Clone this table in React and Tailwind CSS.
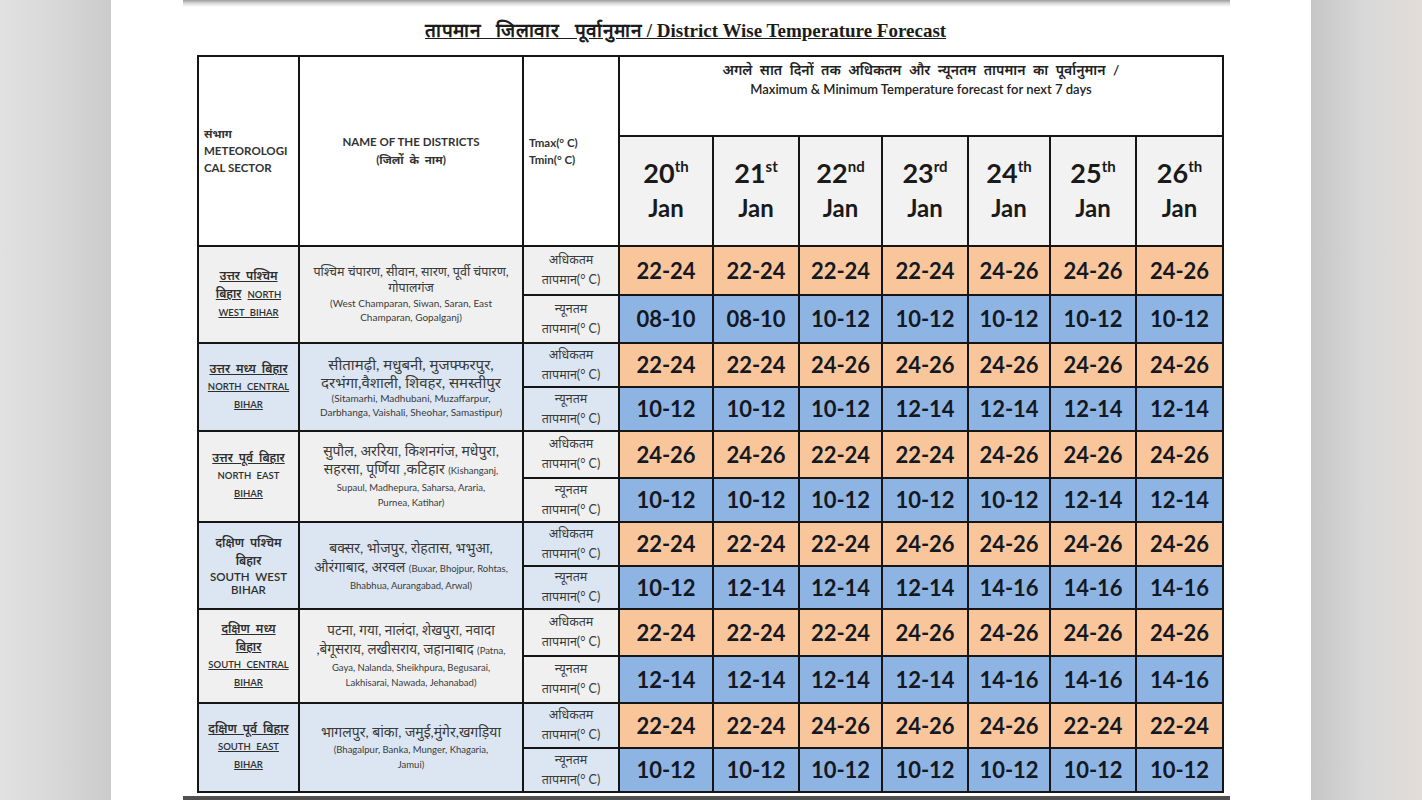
import React from "react";

const dates = [
  ["20", "th"],
  ["21", "st"],
  ["22", "nd"],
  ["23", "rd"],
  ["24", "th"],
  ["25", "th"],
  ["26", "th"],
];

// each district line: [hindi, english] - either part may be empty
const groups = [
  {
    bg: "bg-[#f0f0f0]",
    h: ["h-[49px]", "h-[48px]"],
    sector: (
      <>
        <div className="underline">उत्तर पश्चिम</div>
        <div>
          <span className="underline">बिहार</span>{" "}
          <span className="text-[9.5px] underline">NORTH</span>
        </div>
        <div className="text-[9.5px] underline">WEST BIHAR</div>
      </>
    ),
    hiSize: "text-[12.5px] leading-[16px]",
    enSize: "text-[10px] leading-[14px]",
    lines: [
      ["पश्चिम चंपारण, सीवान, सारण, पूर्वी चंपारण,", ""],
      ["गोपालगंज", ""],
      ["", "(West Champaran, Siwan, Saran, East"],
      ["", "Champaran, Gopalganj)"],
    ],
    max: ["22-24", "22-24", "22-24", "22-24", "24-26", "24-26", "24-26"],
    min: ["08-10", "08-10", "10-12", "10-12", "10-12", "10-12", "10-12"],
  },
  {
    bg: "bg-[#dce6f2]",
    h: ["h-[44px]", "h-[44px]"],
    sector: (
      <>
        <div className="underline">उत्तर मध्य बिहार</div>
        <div className="text-[9.5px] underline">NORTH CENTRAL</div>
        <div className="text-[9.5px] underline">BIHAR</div>
      </>
    ),
    hiSize: "text-[15px] leading-[18px]",
    enSize: "text-[10px] leading-[14px]",
    lines: [
      ["सीतामढ़ी, मधुबनी, मुजफ्फरपुर,", ""],
      ["दरभंगा,वैशाली, शिवहर, समस्तीपुर", ""],
      ["", "(Sitamarhi, Madhubani, Muzaffarpur,"],
      ["", "Darbhanga, Vaishali, Sheohar, Samastipur)"],
    ],
    max: ["22-24", "22-24", "24-26", "24-26", "24-26", "24-26", "24-26"],
    min: ["10-12", "10-12", "10-12", "12-14", "12-14", "12-14", "12-14"],
  },
  {
    bg: "bg-[#f0f0f0]",
    h: ["h-[47px]", "h-[44px]"],
    sector: (
      <>
        <div className="underline">उत्तर पूर्व बिहार</div>
        <div className="text-[9.5px]">NORTH EAST</div>
        <div className="text-[9.5px] underline">BIHAR</div>
      </>
    ),
    hiSize: "text-[14px] leading-[18px]",
    enSize: "text-[9.5px] leading-[15px]",
    lines: [
      ["सुपौल, अररिया, किशनगंज, मधेपुरा,", ""],
      ["सहरसा, पूर्णिया ,कटिहार", "(Kishanganj,"],
      ["", "Supaul, Madhepura, Saharsa,  Araria,"],
      ["", "Purnea, Katihar)"],
    ],
    max: ["24-26", "24-26", "22-24", "22-24", "24-26", "24-26", "24-26"],
    min: ["10-12", "10-12", "10-12", "10-12", "10-12", "12-14", "12-14"],
  },
  {
    bg: "bg-[#dce6f2]",
    h: ["h-[44px]", "h-[43px]"],
    sector: (
      <>
        <div>दक्षिण पश्चिम</div>
        <div>बिहार</div>
        <div className="text-[11.5px] leading-[13px]">SOUTH WEST</div>
        <div className="text-[11.5px] leading-[13px]">BIHAR</div>
      </>
    ),
    hiSize: "text-[14px] leading-[19px]",
    enSize: "text-[9.5px] leading-[15px]",
    lines: [
      ["बक्सर, भोजपुर, रोहतास, भभुआ,", ""],
      ["औरंगाबाद, अरवल", "(Buxar, Bhojpur, Rohtas,"],
      ["", "Bhabhua, Aurangabad, Arwal)"],
    ],
    max: ["22-24", "22-24", "22-24", "24-26", "24-26", "24-26", "24-26"],
    min: ["10-12", "12-14", "12-14", "12-14", "14-16", "14-16", "14-16"],
  },
  {
    bg: "bg-[#f0f0f0]",
    h: ["h-[47px]", "h-[47px]"],
    sector: (
      <>
        <div className="underline">दक्षिण मध्य</div>
        <div className="underline">बिहार</div>
        <div className="text-[9.5px] underline">SOUTH CENTRAL</div>
        <div className="text-[9.5px] underline">BIHAR</div>
      </>
    ),
    hiSize: "text-[13.5px] leading-[19px]",
    enSize: "text-[9.5px] leading-[15px]",
    lines: [
      ["पटना, गया, नालंदा, शेखपुरा, नवादा", ""],
      [",बेगूसराय, लखीसराय, जहानाबाद", "(Patna,"],
      ["", "Gaya, Nalanda, Sheikhpura, Begusarai,"],
      ["", "Lakhisarai, Nawada, Jehanabad)"],
    ],
    max: ["22-24", "22-24", "22-24", "24-26", "24-26", "24-26", "24-26"],
    min: ["12-14", "12-14", "12-14", "12-14", "14-16", "14-16", "14-16"],
  },
  {
    bg: "bg-[#dce6f2]",
    h: ["h-[45px]", "h-[44px]"],
    sector: (
      <>
        <div className="underline">दक्षिण पूर्व बिहार</div>
        <div className="text-[9.5px] underline">SOUTH EAST</div>
        <div className="text-[9.5px] underline">BIHAR</div>
      </>
    ),
    hiSize: "text-[14px] leading-[20px]",
    enSize: "text-[9.5px] leading-[15px]",
    lines: [
      ["भागलपुर, बांका, जमुई,मुंगेर,खगड़िया", ""],
      ["", "(Bhagalpur, Banka, Munger, Khagaria,"],
      ["", "Jamui)"],
    ],
    max: ["22-24", "22-24", "24-26", "24-26", "24-26", "22-24", "22-24"],
    min: ["10-12", "10-12", "10-12", "10-12", "10-12", "10-12", "10-12"],
  },
];

const cell = "border-2 border-[#151515]";

function DistrictLines({ g }) {
  return (
    <div className="flex flex-col items-center whitespace-nowrap">
      {g.lines.map(([hi, en], i) => (
        <div key={i} className={hi ? g.hiSize : g.enSize}>
          {hi}
          {hi && en ? " " : null}
          {en && <span className={hi ? "text-[9.5px]" : ""}>{en}</span>}
        </div>
      ))}
    </div>
  );
}

function TempRow({ g, kind }) {
  const isMax = kind === "max";
  const values = isMax ? g.max : g.min;
  return (
    <tr className={isMax ? g.h[0] : g.h[1]}>
      {isMax && (
        <>
          <td
            rowSpan={2}
            className={`${cell} ${g.bg} text-center align-middle text-[12px] leading-[18px] [word-spacing:3px] text-[#2e2e2e] font-semibold px-1`}
          >
            {g.sector}
          </td>
          <td
            rowSpan={2}
            className={`${cell} ${g.bg} text-center align-middle px-1 text-[#3a3a3a]`}
          >
            <DistrictLines g={g} />
          </td>
        </>
      )}
      <td
        className={`${cell} ${g.bg} text-center align-middle text-[12.5px] leading-[20px] text-[#3a3a3a]`}
      >
        <div>{isMax ? "अधिकतम" : "न्यूनतम"}</div>
        <div>तापमान(° C)</div>
      </td>
      {values.map((v, i) => (
        <td
          key={i}
          className={`${cell} ${isMax ? "bg-[#f9c69c]" : "bg-[#8eb4e3]"} text-center align-middle text-[22px] font-bold text-[#141822]`}
        >
          {v}
        </td>
      ))}
    </tr>
  );
}

export default function App() {
  return (
    <div className="flex w-[1422px] h-[800px] overflow-hidden font-['Lato','Noto_Sans',sans-serif]">
      <div className="w-[111px] shrink-0 bg-gradient-to-r from-[#e1e1e1] via-[#d8d8d8] to-[#cbcbcb]" />

      <div className="w-[1200px] shrink-0 bg-white flex flex-col">
        <div className="ml-[72px] w-[1047px] h-[8px] bg-gradient-to-b from-[#9c9c9c] via-[#dcdcdc] to-white" />

        <h1 className="mt-[12px] ml-[314px] h-[24px] font-['Liberation_Serif',serif] font-bold text-[19px] leading-[24px] text-[#1c1c1c] underline whitespace-nowrap">
          <span className="[word-spacing:10px] tracking-[0.5px]">
            तापमान जिलावार पूर्वानुमान
          </span>{" "}
          / District Wise Temperature Forecast
        </h1>

        <table className="mt-[12px] ml-[86px] w-[1025px] table-fixed border-collapse">
          <colgroup>
            <col className="w-[101px]" />
            <col className="w-[224px]" />
            <col className="w-[96px]" />
            <col className="w-[94px]" />
            <col className="w-[86px]" />
            <col className="w-[83px]" />
            <col className="w-[86px]" />
            <col className="w-[82px]" />
            <col className="w-[86px]" />
            <col className="w-[87px]" />
          </colgroup>
          <thead>
            <tr className="h-[80px]">
              <td
                rowSpan={2}
                className={`${cell} bg-white align-middle text-left pl-[5px] text-[11.5px] leading-[17px] font-bold text-[#333]`}
              >
                <div>संभाग</div>
                <div>METEOROLOGI</div>
                <div>CAL SECTOR</div>
              </td>
              <td
                rowSpan={2}
                className={`${cell} bg-white align-middle text-center text-[11.5px] leading-[18px] font-bold text-[#333]`}
              >
                <div>NAME OF THE DISTRICTS</div>
                <div className="[word-spacing:3px]">(जिलों के नाम)</div>
              </td>
              <td
                rowSpan={2}
                className={`${cell} bg-white align-middle text-left pl-[5px] text-[11.5px] leading-[17px] font-bold text-[#333]`}
              >
                <div>Tmax(° C)</div>
                <div>Tmin(° C)</div>
              </td>
              <td
                colSpan={7}
                className={`${cell} bg-white align-top text-center pt-[2px] text-[#222]`}
              >
                <div className="text-[14px] leading-[22px] font-semibold [word-spacing:4px]">
                  अगले सात दिनों तक अधिकतम और न्यूनतम तापमान का पूर्वानुमान /
                </div>
                <div className="text-[13px] leading-[16px] font-semibold">
                  Maximum &amp; Minimum Temperature forecast for next 7 days
                </div>
              </td>
            </tr>
            <tr className="h-[110px]">
              {dates.map(([d, s]) => (
                <td
                  key={d}
                  className={`${cell} bg-[#f2f2f2] text-center align-middle font-bold text-[#1a1a1a] text-[24px] leading-[34px]`}
                >
                  <div>
                    <span className="text-[27px]">{d}</span>
                    <sup className="text-[15px] top-[-0.75em]">{s}</sup>
                  </div>
                  <div>Jan</div>
                </td>
              ))}
            </tr>
          </thead>
          <tbody>
            {groups.map((g, i) => (
              <React.Fragment key={i}>
                <TempRow g={g} kind="max" />
                <TempRow g={g} kind="min" />
              </React.Fragment>
            ))}
          </tbody>
        </table>

        <div className="mt-[3px] ml-[72px] w-[1047px] h-[5px] bg-[#505050]" />
      </div>

      <div className="w-[111px] shrink-0 bg-gradient-to-r from-[#c6c6c6] via-[#d9d9d9] to-[#e2ddd8]" />
    </div>
  );
}
